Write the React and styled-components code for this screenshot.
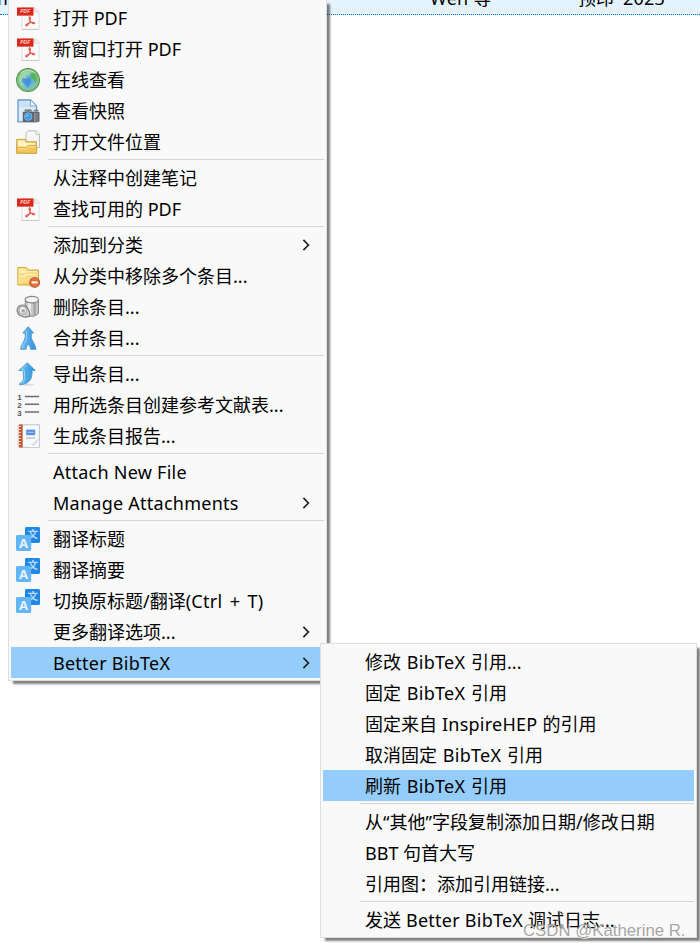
import React from 'react'
import styled, { createGlobalStyle, css } from 'styled-components'

const colors = {
  menu: '#f9f9f9',
  border: '#dedede',
  highlight: '#94cdfb',
  line: '#d4d4d4',
  selected: '#e5f3ff',
  focus: '#0078d7'
}

const mainItems = [
  { icon: PdfIcon, label: '打开 PDF' },
  { icon: PdfIcon, label: '新窗口打开 PDF' },
  { icon: GlobeIcon, label: '在线查看' },
  { icon: SnapshotIcon, label: '查看快照' },
  { icon: OpenFolderIcon, label: '打开文件位置' },
  null,
  { label: '从注释中创建笔记' },
  { icon: PdfIcon, label: '查找可用的 PDF' },
  null,
  { label: '添加到分类', submenu: true },
  { icon: RemoveFolderIcon, label: '从分类中移除多个条目...' },
  { icon: TrashIcon, label: '删除条目...' },
  { icon: MergeIcon, label: '合并条目...' },
  null,
  { icon: ExportIcon, label: '导出条目...' },
  { icon: ListIcon, label: '用所选条目创建参考文献表...' },
  { icon: ReportIcon, label: '生成条目报告...' },
  null,
  { label: 'Attach New File' },
  { label: 'Manage Attachments', submenu: true },
  null,
  { icon: TranslateIcon, label: '翻译标题' },
  { icon: TranslateIcon, label: '翻译摘要' },
  { icon: TranslateIcon, label: '切换原标题/翻译(Ctrl + T)' },
  { label: '更多翻译选项...', submenu: true },
  { label: 'Better BibTeX', submenu: true, active: true }
]

const bibtexItems = [
  { label: '修改 BibTeX 引用...' },
  { label: '固定 BibTeX 引用' },
  { label: '固定来自 InspireHEP 的引用' },
  { label: '取消固定 BibTeX 引用' },
  { label: '刷新 BibTeX 引用', active: true },
  null,
  { label: '从“其他”字段复制添加日期/修改日期' },
  { label: 'BBT 句首大写' },
  { label: '引用图：添加引用链接...' },
  null,
  { label: '发送 Better BibTeX 调试日志...' }
]

// Latin words get a little tracking; shortcuts, dates and lone words wider spaces
function wordGap (run) {
  if (run.includes('+')) return '2.4px'
  if (/\d/.test(run)) return '4px'
  if (/^ BibTeX $/.test(run)) return '.9px'
  return 0
}

function Label ({ text }) {
  return (
    <Text>
      {text.split(/([\x20-\x7e“”]+)/).filter(Boolean).map((run, i) => (
        /[a-z0-9]/.test(run)
          ? <Latin key={i} $gap={wordGap(run)}>{run}</Latin>
          : run
      ))}
    </Text>
  )
}

function MenuItems ({ items }) {
  return items.map((item, i) => {
    if (!item) return <Separator key={i} />
    const Icon = item.icon
    return (
      <Item key={i} $active={item.active}>
        <IconSlot>{Icon && <Icon />}</IconSlot>
        <Label text={item.label} />
        {item.submenu && <Chevron />}
      </Item>
    )
  })
}

export default function App () {
  return (
    <Page>
      <GlobalStyle />
      <SelectedRow>
        <TitleCell>m</TitleCell>
        <CreatorCell><Label text='Wen 等' /></CreatorCell>
        <Label text='预印 2023' />
      </SelectedRow>
      <MainMenu>
        <MenuItems items={mainItems} />
      </MainMenu>
      <SubMenu>
        <MenuItems items={bibtexItems} />
      </SubMenu>
      <Watermark>CSDN @Katherine R.</Watermark>
    </Page>
  )
}

function Chevron () {
  return (
    <Arrow width='8' height='12' viewBox='0 0 8 12'>
      <path d='M1.4.9L6.4 6l-5 5.1' fill='none' stroke='#222' strokeWidth='1.7' />
    </Arrow>
  )
}

function PdfIcon () {
  return (
    <svg width='24' height='24' viewBox='0 0 24 24'>
      <path d='M6 1.5h13l4 4v18H6z' fill='#fdfdfd' stroke='#dcdcdc' />
      <path d='M6 23.4h17' stroke='#c4c4c4' />
      <path d='M18.5 1.5v4.5h4.5' fill='#eee' stroke='#dcdcdc' />
      <rect x='1' y='1.5' width='16.5' height='8' fill='#dc2718' />
      <path d='M1 9.4h16.5' stroke='#d9675d' strokeWidth='.8' />
      <PdfText x='4.2' y='6.9'>PDF</PdfText>
      <path
        d='M13.6 10.8c1.1 0 .9 2.5.2 4.6-.9 2.4-2.6 4.7-3.8 4.3-1-.7 2.2-2.9 5.1-3.2 2.3-.3 3.7.1 3.4.9-.5 1-3.4-.7-4.5-2.7-.8-1.9-1.2-3.8-.4-3.9z'
        fill='none' stroke='#e4574a' strokeWidth='1.2'
      />
    </svg>
  )
}

function GlobeIcon () {
  return (
    <svg width='24' height='24' viewBox='0 0 24 24'>
      <defs>
        <radialGradient id='sea' cx='.5' cy='.55' r='.5'>
          <stop offset='0' stopColor='#4b9bdc' />
          <stop offset='.6' stopColor='#79bcd6' />
          <stop offset='1' stopColor='#8ccd91' />
        </radialGradient>
      </defs>
      <circle cx='12' cy='12' r='11.4' fill='url(#sea)' stroke='#4f8d4f' strokeWidth='1.1' />
      <circle cx='12' cy='12' r='10.2' fill='none' stroke='#7cc06f' strokeWidth='1.4' />
      <path d='M4 7.2l3.6-3.4 5.4-.4 1.2 2-3.3 2.3-1.6 3-3 .4-1.1 2.7 2 1.8.7 4-3.6-3.6-1.7-4.2z' fill='#a5dba6' opacity='.8' />
      <path d='M14.8 5.4l3.3-.6 2.3 3.3.4 4-1.6 3-2.3-3.9-2.8-1.2z' fill='#57b25c' />
      <path d='M6.5 9.8l3 1.2 4-1.2 2.3 2.3-1.6 3.2-2.5 5-2.2-4.4-3-2z' fill='#3d8ed8' opacity='.8' />
      <path d='M5 4.8c4-3.2 10-3.2 13.8 0' fill='none' stroke='#dff2da' opacity='.7' />
    </svg>
  )
}

function SnapshotIcon () {
  return (
    <svg width='24' height='24' viewBox='0 0 24 24'>
      <path d='M2 1h12.5l6 6v15.8H2z' fill='#dcecfb' stroke='#6297cf' strokeWidth='1.3' />
      <path d='M3.2 2.5h10.5l5.5 5.7H3.2z' fill='#c9e0f7' />
      <path d='M14.5 1v6h6z' fill='#fff' stroke='#77a7d8' />
      <rect x='6.8' y='12.8' width='16.7' height='10.2' rx='1' fill='#5d6267' />
      <path d='M9 12.5v-1.6h6l1 1.6M18 12.2v-1h4v1' fill='#80878d' stroke='#71777c' />
      <rect x='18.5' y='13.7' width='4' height='9' fill='#777d82' />
      <path d='M18.6 14v8.5' stroke='#aaa' strokeWidth='.8' />
      <circle cx='12.3' cy='17.6' r='4.7' fill='#93b8da' stroke='#505a64' />
      <circle cx='12.3' cy='17.6' r='3.3' fill='#3f9be6' />
      <circle cx='11.4' cy='16.6' r='1.1' fill='#8ccaf7' />
    </svg>
  )
}

function OpenFolderIcon () {
  return (
    <svg width='24' height='24' viewBox='0 0 24 24'>
      <path d='M10 3.2L12 .8h8.5l3 3v13.8H10z' fill='#f6f6f6' stroke='#bdbdbd' />
      <path d='M20 .8v3.7h3.5' fill='#fff' stroke='#c4c4c4' />
      <path d='M.7 23.3V9.4h8.6l1.2 2.3h10v11.6z' fill='#f3cc68' stroke='#d3a445' />
      <path d='M1.9 16.6v-6h6.7l1.2 2.3h9.6v1.8h-7l-1.7 1.9z' fill='#fff3c4' />
      <path d='M.9 23.2v-5.4h9.3l1.9-2.1h8.6v7.5z' fill='#f1c657' stroke='#d9a944' />
      <path d='M2 18.9h8.7l1.9-2.1h7' fill='none' stroke='#fde9a8' />
    </svg>
  )
}

function RemoveFolderIcon () {
  return (
    <svg width='24' height='24' viewBox='0 0 24 24'>
      <path d='M1.8 21v-17.5h8.5l2 2.5H22.5v15z' fill='#f6cf6a' stroke='#d8a844' />
      <path d='M3.2 19.8V5h6.2l2 2.5h9.8v9' fill='#f9dc86' stroke='#fff1b1' />
      <path d='M3.8 12.5h4l2-2H19' fill='none' stroke='#fff6c5' strokeWidth='1.2' />
      <rect x='4.5' y='6.6' width='5' height='2.4' fill='#fff8c9' />
      <circle cx='18.6' cy='18.4' r='4.9' fill='#e66f3b' stroke='#b5642f' strokeWidth='1.1' />
      <rect x='15.6' y='17.4' width='6' height='2' fill='#fff' />
    </svg>
  )
}

function TrashIcon () {
  return (
    <svg width='24' height='24' viewBox='0 0 24 24'>
      <path d='M9.3 5v13.2c2 4.2 10.4 4.2 13.1 0V5z' fill='#c8c8c8' stroke='#868686' />
      <path d='M13.4 8v12' stroke='#efefef' strokeWidth='2.8' />
      <path d='M18.6 8v12' stroke='#9e9e9e' strokeWidth='2' />
      <ellipse cx='15.8' cy='4.6' rx='6.7' ry='3.2' fill='#f6f6f6' stroke='#8a8a8a' strokeWidth='1.2' />
      <path d='M1.2 15c.4-4.6 5-5.8 8-4.4 2.6 1.2 5 7 4.6 9.8-1.6 2.4-7.6 2-10 0-1.8-1.4-2.8-3.2-2.6-5.4z' fill='#cfcfcf' stroke='#828282' strokeWidth='1.2' />
      <ellipse cx='6.8' cy='15.4' rx='3.8' ry='3.9' fill='#f7f7f7' stroke='#999' />
      <circle cx='7.2' cy='15.8' r='1.9' fill='#a4a4a4' />
    </svg>
  )
}

function MergeIcon () {
  return (
    <svg width='24' height='24' viewBox='0 0 24 24'>
      <defs>
        <linearGradient id='merge' x2='1'>
          <stop stopColor='#72c0f2' />
          <stop offset='1' stopColor='#3190da' />
        </linearGradient>
      </defs>
      <path d='M12.2.7l5.4 6.4h-2.3v4.4c.7 4.1 4.2 6.4 4.6 11.8h-5.4c-.2-2.4-.8-3.6-2.2-4.8-1.4 1.2-2 2.4-2.2 4.8H4.6c.4-5 3.9-7.7 4.6-11.8V7.1H6.8z' fill='url(#merge)' stroke='#4a98d0' strokeWidth='.9' />
      <path d='M10.6 5v7.5c-.6 3.2-3.8 5.5-4.6 9.5' fill='none' stroke='#9bd5f8' />
    </svg>
  )
}

function ExportIcon () {
  return (
    <svg width='24' height='24' viewBox='0 0 24 24'>
      <defs>
        <linearGradient id='export' x2='1'>
          <stop stopColor='#69bced' />
          <stop offset='1' stopColor='#3292dc' />
        </linearGradient>
      </defs>
      <ellipse cx='12' cy='22.7' rx='6' ry='1' fill='#ddd' />
      <path d='M11.3.8l8 7.7h-3.3c.5 7-1.4 13.6-12.4 14.4v-1.4c4.5-1.7 4.4-6 3.5-13H2.8z' fill='url(#export)' stroke='#4a98d0' strokeWidth='.9' />
      <path d='M11.2 2.5L5.3 7.8h2.8c.9 6.7.8 10.6-2.1 13.6' fill='none' stroke='#9cd7f5' />
    </svg>
  )
}

function ListIcon () {
  return (
    <svg width='24' height='24' viewBox='0 0 24 24'>
      <path d='M9 3.6h14M9 11.3h14M9 19h14' stroke='#6c6c6c' strokeWidth='1.5' />
      <ListNumber x='1.2' y='7'>1</ListNumber>
      <ListNumber x='1.2' y='14.8'>2</ListNumber>
      <ListNumber x='1.2' y='22.6'>3</ListNumber>
    </svg>
  )
}

function ReportIcon () {
  return (
    <svg width='24' height='24' viewBox='0 0 24 24'>
      <rect x='4' y='.8' width='19.3' height='22.5' fill='#f8fafc' stroke='#b9c1ca' />
      <rect x='2.7' y='.5' width='4' height='23' fill='#c35a34' />
      <path d='M1 2.5h4M1 5.5h4M1 8.5h4M1 11.5h4M1 14.5h4M1 17.5h4M1 20.5h4' stroke='#ead2c8' strokeWidth='1.2' />
      <rect x='10.2' y='5.6' width='9' height='5.6' fill='#5792e5' />
      <path d='M11.5 8.4H18' stroke='#a3c8f7' />
      <path d='M10.2 14h9' stroke='#a9b2bd' strokeWidth='1.2' />
      <path d='M13 23l9.5-9.5V23z' fill='#fff' />
      <path d='M14.5 21l8-7v3l-4 5z' fill='#dde2e8' />
    </svg>
  )
}

function TranslateIcon () {
  return (
    <svg width='24' height='24' viewBox='0 0 24 24'>
      <rect x='9' width='15' height='16' rx='1.4' fill='#1f87e5' />
      <HanGlyph x='11.4' y='11.2'>文</HanGlyph>
      <rect y='8' width='15.2' height='16' rx='1.4' fill='#64b5f6' />
      <LatinGlyph x='3' y='20.8'>A</LatinGlyph>
    </svg>
  )
}

const GlobalStyle = createGlobalStyle`
  body {
    margin: 0;
    background: #fff;
  }
`

const uiFont = css`
  font-family: 'Noto Sans', 'Noto Sans CJK SC', sans-serif;
  font-size: 18px;
  line-height: 31px;
  color: #000;
  white-space: pre;
`

const Page = styled.div`
  position: relative;
  width: 700px;
  height: 946px;
  overflow: hidden;
  ${uiFont}
`

const SelectedRow = styled.div`
  display: flex;
  align-items: flex-end;
  box-sizing: border-box;
  height: 15px;
  background: ${colors.selected};
  border-bottom: 1px dotted ${colors.focus};
`

const TitleCell = styled.div`
  flex: 0 0 430px;
  text-indent: -9px;
`

const CreatorCell = styled.div`
  display: flex;
  flex: 0 0 148px;
`

const menuFrame = css`
  position: absolute;
  box-sizing: border-box;
  padding: 2px;
  background: ${colors.menu};
  border: 1px solid ${colors.border};
  box-shadow: 4px 4px 2px -1px rgba(0, 0, 0, .5);
`

const MainMenu = styled.div`
  ${menuFrame}
  top: -1px;
  left: 8px;
  width: 319px;
`

const SubMenu = styled.div`
  ${menuFrame}
  top: 643px;
  left: 320px;
  width: 377px;
`

const Item = styled.div`
  display: flex;
  align-items: center;
  height: 31px;
  background: ${props => props.$active ? colors.highlight : 'transparent'};
`

const IconSlot = styled.div`
  flex: none;
  display: flex;
  width: 24px;
  height: 24px;
  margin: 0 13px 0 5px;
`

const Text = styled.span`
  flex: 1;
  padding-top: 2px;
`

const Latin = styled.span`
  letter-spacing: .25px;
  word-spacing: ${props => props.$gap};
`

const Arrow = styled.svg`
  flex: none;
  margin-right: 14px;
`

const Separator = styled.div`
  height: 1px;
  margin: 2px 0 2px 37px;
  background: ${colors.line};
`

const Watermark = styled.div`
  position: absolute;
  left: 523px;
  top: 915px;
  font-family: 'Liberation Sans', sans-serif;
  font-size: 16.8px;
  color: rgba(150, 150, 150, .85);
  text-shadow: 1px 1px 0 rgba(255, 255, 255, .7);
`

const PdfText = styled.text`
  font: italic bold 5px 'Liberation Sans', sans-serif;
  fill: #fbd5d1;
`

const ListNumber = styled.text`
  font: bold 8px 'Liberation Sans', sans-serif;
  fill: #555;
`

const HanGlyph = styled.text`
  font: bold 10.5px 'Noto Sans CJK SC', sans-serif;
  fill: #b5dafa;
`

const LatinGlyph = styled.text`
  font: bold 13px 'Noto Sans', sans-serif;
  fill: #e6f3fe;
`
